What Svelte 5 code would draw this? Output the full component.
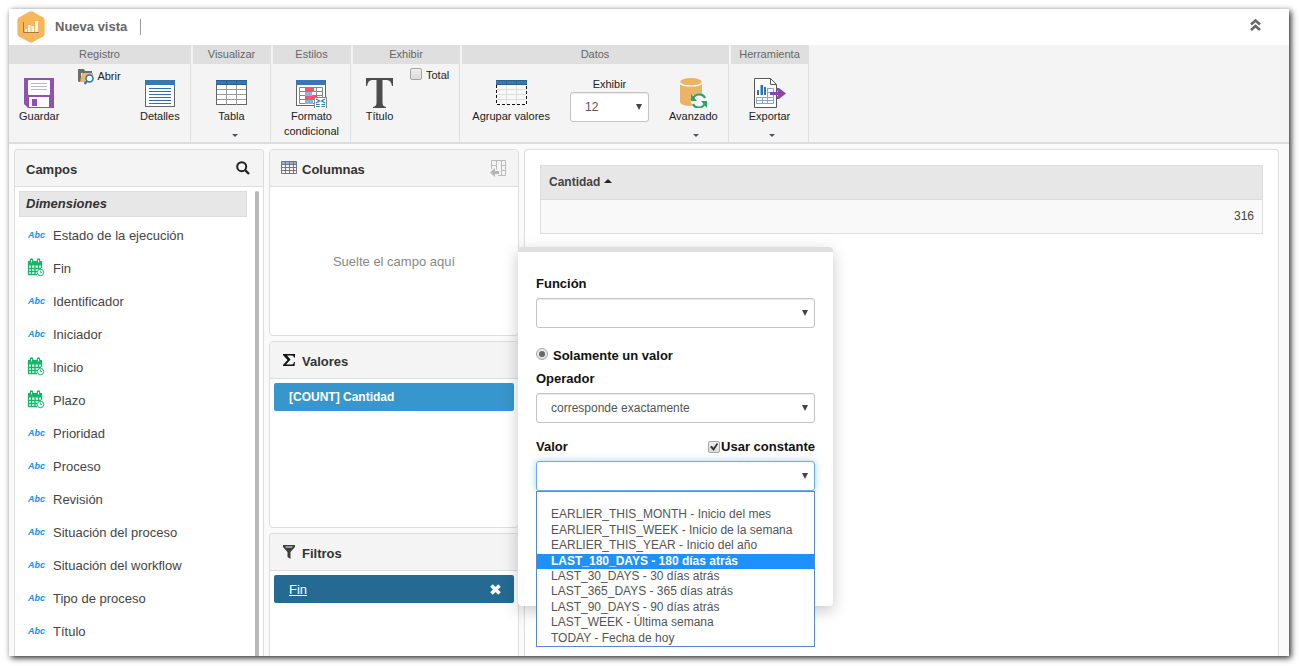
<script>
  const fields = [
    { name: 'Estado de la ejecución', type: 'text' },
    { name: 'Fin', type: 'date' },
    { name: 'Identificador', type: 'text' },
    { name: 'Iniciador', type: 'text' },
    { name: 'Inicio', type: 'date' },
    { name: 'Plazo', type: 'date' },
    { name: 'Prioridad', type: 'text' },
    { name: 'Proceso', type: 'text' },
    { name: 'Revisión', type: 'text' },
    { name: 'Situación del proceso', type: 'text' },
    { name: 'Situación del workflow', type: 'text' },
    { name: 'Tipo de proceso', type: 'text' },
    { name: 'Título', type: 'text' }
  ];

  const constants = [
    '',
    'EARLIER_THIS_MONTH - Inicio del mes',
    'EARLIER_THIS_WEEK - Inicio de la semana',
    'EARLIER_THIS_YEAR - Inicio del año',
    'LAST_180_DAYS - 180 días atrás',
    'LAST_30_DAYS - 30 días atrás',
    'LAST_365_DAYS - 365 días atrás',
    'LAST_90_DAYS - 90 días atrás',
    'LAST_WEEK - Última semana',
    'TODAY - Fecha de hoy'
  ];

  let highlighted = $state(4);
  let showTotal = $state(false);
  let useConstant = $state(true);
  let mode = $state('single');
</script>

{#snippet gridRows(color)}
  <path d="M1 9.5h29M1 14.5h29M1 19.5h29M10.5 4v21M20.5 4v21" stroke={color} fill="none" />
{/snippet}

<div class="page">
  <div class="window">
    <header class="titlebar">
      <svg class="logo" width="28" height="32" viewBox="0 0 28 32">
        <path d="M12 .8q2-1 4 0l10 5.6q1.6 1 1.6 3v13q0 2-1.6 3l-10 5.6q-2 1-4 0L2 25.400q-1.600-1-1.600-3v-13q0-2 1.600-3z" fill="#f6b65c" />
        <path d="M6.500 11v10.500H22" stroke="#a5794a" fill="none" />
        <path d="M8 18h2v3H8zM11 14h2.500v7H11zM14.500 15H17v6h-2.500zM18 10h3v11h-3z" fill="#fff6e8" />
      </svg>
      <h1>Nueva vista</h1>
      <span class="divider"></span>
      <button class="collapse" type="button" aria-label="Contraer">
        <svg width="11" height="14" viewBox="0 0 11 14">
          <path d="M1 6.500 5.500 2.500 10 6.500M1 12 5.500 8 10 12" stroke="#666" stroke-width="2.500" fill="none" />
        </svg>
      </button>
    </header>

    <nav class="ribbon">
      <section class="group registro">
        <h2>Registro</h2>
        <div class="tools thirds">
          <button class="tool" type="button">
            <svg width="32" height="30" viewBox="0 0 32 30">
              <path d="M1 0h30v30H5l-4-4z" fill="#8e52b1" />
              <rect x="5" y="2" width="22" height="15" rx="1" fill="#fff" />
              <path d="M8 5.500h16M8 8.500h16M8 11.500h16" stroke="#bbb" />
              <rect x="6" y="19" width="20" height="10" fill="#fff" />
              <rect x="9" y="21" width="5" height="7" fill="#8e52b1" />
            </svg>
            <span>Guardar</span>
          </button>
          <button class="tool small" type="button">
            <svg width="17" height="17" viewBox="0 0 17 17">
              <path d="M0 1h6l1 2h7v2H3v9H1L0 13z" fill="#6d6d6d" />
              <path d="M4 5h11v3H8l-1 6H2z" fill="#e9b567" />
              <circle cx="11.500" cy="10.500" r="3.500" fill="#fff" stroke="#2f71b1" stroke-width="1.600" />
              <path d="m9 13-2.500 3" stroke="#2f71b1" stroke-width="2" />
            </svg>
            <span>Abrir</span>
          </button>
          <button class="tool" type="button">
            <svg width="32" height="30" viewBox="0 0 32 30">
              <rect x="1.500" y="2.500" width="29" height="26" fill="#fff" stroke="#666" />
              <rect x="1" y="2" width="30" height="5" fill="#3a76b5" />
              <path d="M5 10.500h22M5 13.500h22M5 16.500h22M5 19.500h22M5 22.500h22M5 25.500h22" stroke="#2f71b1" />
            </svg>
            <span>Detalles</span>
          </button>
        </div>
      </section>

      <section class="group">
        <h2>Visualizar</h2>
        <div class="tools">
          <button class="tool" type="button">
            <svg width="31" height="30" viewBox="0 -2 31 30">
              <rect x=".5" y=".5" width="30" height="24" fill="#fff" stroke="#666" />
              {@render gridRows('#999')}
              <rect width="31" height="5" fill="#3a76b5" />
              <path d="M10.500 1v3M20.500 1v3M0 .5h31M0 4.500h31" stroke="#2c5f94" />
            </svg>
            <span>Tabla</span>
            <i class="caret"></i>
          </button>
        </div>
      </section>

      <section class="group">
        <h2>Estilos</h2>
        <div class="tools">
          <button class="tool" type="button">
            <svg width="31" height="30" viewBox="0 0 31 30">
              <rect x=".5" y="2.500" width="29" height="25" fill="#fff" stroke="#666" />
              <rect width="30" height="5" y="2" fill="#3a76b5" />
              <path d="M3.500 9.500h23v16h-23zM3 13.500h24M3 17.500h24M3 21.500h24M20.500 9v12" stroke="#888" fill="none" />
              <rect x="9" y="10" width="9" height="4" fill="#f4556a" />
              <rect x="9" y="14" width="7" height="4" fill="#8fb0e4" />
              <rect x="9" y="18" width="12" height="4" fill="#f4556a" />
              <rect x="9" y="22" width="8" height="4" fill="#8fb0e4" />
              <rect x="18.500" y="19.500" width="12" height="11" fill="#fff" stroke="#888" />
              <path d="m20 21 3.500 2L20 25M29 21l-3.500 2 3.500 2M20 26.500h3.500M20 28.500h3.500M25.500 26.500H29M25.500 28.500H29" stroke="#1f7fb5" stroke-width="1.200" fill="none" />
            </svg>
            <span>Formato<br />condicional</span>
          </button>
        </div>
      </section>

      <section class="group exhibir">
        <h2>Exhibir</h2>
        <div class="tools halves">
          <button class="tool" type="button">
            <svg width="28" height="30" viewBox="0 0 28 30">
              <path d="M0 0h27v8h-1q-1-6-5-6h-4.500v23q0 3.500 3.500 4v1H7v-1q3.500-.5 3.500-4V2H6Q2 2 1 8H0z" fill="#4c4c4c" />
            </svg>
            <span>Título</span>
          </button>
          <label class="total">
            <input type="checkbox" bind:checked={showTotal} />
            Total
          </label>
        </div>
      </section>

      <section class="group datos">
        <h2>Datos</h2>
        <div class="tools">
          <button class="tool" type="button">
            <svg width="31" height="30" viewBox="0 -2 31 30">
              <path d="M0 0h31v25H0z" fill="#f8f8f8" />
              {@render gridRows('#ddd')}
              <path d="M.5 5v19.500h30V5" stroke="#111" stroke-dasharray="3 2" fill="none" />
              <rect width="31" height="5" fill="#3a76b5" />
              <path d="M10.500 1v3M20.500 1v3M0 .5h31M0 4.500h31" stroke="#2c5f94" />
            </svg>
            <span>Agrupar valores</span>
          </button>
          <div class="amount">
            <label for="amount">Exhibir</label>
            <div class="select">
              <select id="amount">
                <option>12</option>
                <option>24</option>
              </select>
            </div>
          </div>
          <button class="tool" type="button">
            <svg width="28" height="30" viewBox="0 0 28 30">
              <path d="M1 4v20q1 4 11 4t11-4V4z" fill="#e9b565" />
              <ellipse cx="12" cy="4" rx="11" ry="4" fill="#e9b565" />
              <path d="M1 4.500q1 3.500 11 3.500t11-3.500" stroke="#fff" stroke-width="1.200" fill="none" />
              <circle cx="20" cy="23" r="8" fill="#f4f4f4" />
              <path d="M14 21a6.500 6.500 0 0 1 12-1M26 25a6.500 6.500 0 0 1-12 1" stroke="#2fa36b" stroke-width="2.200" fill="none" />
              <path d="M12 16v7h6zM28 30v-7h-6z" fill="#2fa36b" />
            </svg>
            <span>Avanzado</span>
            <i class="caret"></i>
          </button>
        </div>
      </section>

      <section class="group">
        <h2>Herramienta</h2>
        <div class="tools">
          <button class="tool" type="button">
            <svg width="33" height="30" viewBox="0 0 33 30">
              <path d="M1.500.5h16l6 6v23h-22z" fill="#fff" stroke="#555" />
              <path d="M17.500.5v6h6" fill="none" stroke="#555" />
              <path d="M4 12h2v5H4zM7.500 7h2.500v10H7.500zM11 9h2v8h-2z" fill="#2f71b1" />
              <path d="M14.500 10.500h6v15h-17v-6h17M3.500 22.500h17M9.500 19.500v6M14.500 10v16M14 14.500h6" stroke="#86a5d3" fill="none" />
              <path d="M17 14h8l-2-4h3l7 5.500-7 5.500h-3l2-4h-8z" fill="#8e44ad" />
            </svg>
            <span>Exportar</span>
            <i class="caret"></i>
          </button>
        </div>
      </section>
    </nav>

    <main class="workspace">
      <aside class="panel fields">
        <div class="panel-header">
          <h3>Campos</h3>
          <button class="icon-button" type="button" aria-label="Buscar">
            <svg width="14" height="14" viewBox="0 0 14 14">
              <circle cx="5.700" cy="5.700" r="4.500" stroke="#222" stroke-width="2" fill="none" />
              <path d="m9 9 4 4" stroke="#222" stroke-width="2.400" />
            </svg>
          </button>
        </div>
        <div class="field-scroll">
          <div class="field-body">
            <h4>Dimensiones</h4>
            <ul class="field-list">
              {#each fields as field}
                <li>
                  {#if field.type === 'date'}
                    <svg width="18" height="19" viewBox="0 0 18 19">
                      <path d="M1 3h14v4.500H1z" fill="#12b866" />
                      <path d="M1.500 4v12.500H10M14.500 4v6M1 10.500h13M1 13.500h9M4.500 7v10M8 7v10M11.500 7v4" stroke="#12b866" stroke-width="1.300" fill="none" />
                      <path d="M4.500 4.500V2M11.500 4.500V2" stroke="#12b866" stroke-width="3.500" stroke-linecap="round" />
                      <path d="M4.500 4.500V2M11.500 4.500V2" stroke="#fff" />
                      <circle cx="13.500" cy="14.500" r="3.200" fill="#fff" stroke="#12b866" />
                      <path d="M13.500 12.500v2h1.500" stroke="#12b866" stroke-width=".8" fill="none" />
                    </svg>
                  {:else}
                    <span class="abc">Abc</span>
                  {/if}
                  {field.name}
                </li>
              {/each}
            </ul>
          </div>
          <div class="scroll-thumb"></div>
        </div>
      </aside>

      <div class="zones">
        <section class="panel zone">
          <div class="panel-header">
            <svg width="17" height="14" viewBox="0 0 17 14">
              <path d="M1 1h15v3H1z" fill="#8fb0e4" />
              <path d="M.5.500h15v12H.5zM0 3.500h16M0 6.500h16M0 9.500h16M4.500 0v13M8.500 0v13M12.500 0v13" stroke="#777" fill="none" />
            </svg>
            <h3>Columnas</h3>
            <button class="icon-button" type="button" aria-label="Mover columnas">
              <svg width="17" height="17" viewBox="0 0 17 17">
                <path d="M1.500 9V.5h14v15H8M6.500.500v9M11.500.500v15M1.500 5.500h5M11.500 5.500h4M11.500 10.500h4" stroke="#bbb" fill="none" />
                <path d="M0 12.500 5 8v3h4v3H5v3z" fill="#b5b5b5" />
              </svg>
            </button>
          </div>
          <div class="drop">Suelte el campo aquí</div>
        </section>

        <section class="panel zone">
          <div class="panel-header">
            <svg width="17" height="14" viewBox="0 0 17 14">
              <path d="M2 1h12v3.500h-1Q12.500 2.500 11 2.500H6L9.500 6.500 5 11.500h6q1.500 0 2-2.500h1l-.5 4H2v-1L6.500 7 2 2z" fill="#111" />
            </svg>
            <h3>Valores</h3>
          </div>
          <div class="chips">
            <div class="chip value">[COUNT] Cantidad</div>
          </div>
        </section>

        <section class="panel zone open">
          <div class="panel-header">
            <svg width="17" height="16" viewBox="0 0 17 16">
              <path d="M2 1h12v2L9.500 8v7L6.500 13V8L2 3z" fill="#3d3d3d" />
              <path d="M4.500 3h7" stroke="#f4f4f4" />
            </svg>
            <h3>Filtros</h3>
          </div>
          <div class="chips">
            <div class="chip filter">
              <a href="#fin">Fin</a>
              <button type="button" aria-label="Quitar filtro">
                <svg width="11" height="11" viewBox="0 0 11 11">
                  <path d="m1.500 1.500 8 8M9.500 1.500l-8 8" stroke="#fff" stroke-width="3.600" />
                </svg>
              </button>
            </div>
          </div>
        </section>

        <form class="popover">
          <label class="caption" for="func">Función</label>
          <div class="select">
            <select id="func"><option></option></select>
          </div>
          <label class="choice">
            <input type="radio" name="mode" value="single" bind:group={mode} />
            Solamente un valor
          </label>
          <label class="caption" for="operator">Operador</label>
          <div class="select">
            <select id="operator"><option>corresponde exactamente</option></select>
          </div>
          <div class="caption-row">
            <label for="constant">Valor</label>
            <label class="constant">
              <input type="checkbox" bind:checked={useConstant} />Usar constante
            </label>
          </div>
          <div class="select active">
            <select id="constant"><option></option></select>
            <ul class="menu" role="listbox" aria-label="Valor">
              {#each constants as constant, i}
                <li
                  role="option"
                  aria-selected={i === highlighted}
                  class:highlighted={i === highlighted}
                  onmouseenter={() => (highlighted = i)}
                >{constant}</li>
              {/each}
            </ul>
          </div>
        </form>
      </div>

      <section class="panel result">
        <table>
          <thead>
            <tr><th>Cantidad <i class="sort"></i></th></tr>
          </thead>
          <tbody>
            <tr><td>316</td></tr>
          </tbody>
        </table>
      </section>
    </main>
  </div>
</div>

<style>
  :global(body) {
    background: #fff;
    font-family: "Liberation Sans", Arial, sans-serif;
  }

  .page, .page * {
    box-sizing: border-box;
  }

  h1, h2, h3, h4, ul {
    margin: 0;
    padding: 0;
  }

  button, select {
    font: inherit;
    color: inherit;
  }

  button {
    padding: 0;
    border: 0;
    background: none;
    cursor: pointer;
  }

  svg {
    display: block;
    flex: none;
  }

  .page {
    display: flex;
    height: 100vh;
    padding: 9px 10px 10px 9px;
  }

  .window {
    flex: 1;
    display: flex;
    flex-direction: column;
    min-width: 0;
    background: #fafafa;
    box-shadow: 2px 2px 6px rgba(0, 0, 0, 0.85);
  }

  .titlebar {
    display: flex;
    align-items: center;
    height: 36px;
    padding: 0 28px 0 8px;
    background: #fff;
  }

  h1 {
    margin: 0 13px 2px 10px;
    font-size: 13px;
    color: #666;
  }

  .divider {
    width: 1px;
    height: 16px;
    background: #999;
  }

  .collapse {
    margin-left: auto;
    padding-bottom: 4px;
  }

  /* ribbon */
  .ribbon {
    display: flex;
    gap: 2px;
    height: 99px;
    background: #f4f4f4;
    border-bottom: 2px solid #ddd;
    font-size: 11px;
    line-height: 15px;
    color: #222;
  }

  .group {
    min-width: 78px;
    border-right: 1px solid #e0e0e0;
  }

  .registro {
    min-width: 182px;
  }

  .exhibir {
    min-width: 107px;
  }

  .datos {
    min-width: 267px;
  }

  h2 {
    height: 19px;
    background: #dfdfdf;
    font-size: 11px;
    font-weight: normal;
    line-height: 19px;
    text-align: center;
    color: #666;
  }

  .tools {
    display: flex;
    justify-content: center;
    align-items: flex-start;
  }

  .thirds {
    display: grid;
    grid-template-columns: repeat(3, 1fr);
  }

  .halves {
    display: grid;
    grid-template-columns: 1fr 1fr;
  }

  .tool {
    display: flex;
    flex-direction: column;
    align-items: center;
    gap: 1px;
    padding-top: 14px;
    line-height: 15px;
  }

  .datos .tool {
    padding-left: 9px;
    padding-right: 9px;
  }

  .tool.small {
    flex-direction: row;
    justify-content: center;
    gap: 2px;
    padding-top: 4px;
  }

  .caret {
    margin: 9px 0 0 6px;
    border: 3px solid transparent;
    border-top-color: #3f5673;
    border-bottom: 0;
  }

  .total {
    display: flex;
    gap: 4px;
    padding: 4px 0 0 4px;
  }

  .amount {
    padding: 12px 11px 0;
    text-align: center;
  }

  .amount label {
    display: block;
    line-height: 16px;
  }

  .amount .select {
    width: 79px;
  }

  input {
    position: relative;
    flex: none;
    width: 12px;
    height: 12px;
    margin: 0;
    appearance: none;
    border: 1px solid #a5a5a5;
    border-radius: 2px;
    background: linear-gradient(#f0f0f0, #dcdcdc);
  }

  input[type="radio"] {
    border-radius: 50%;
  }

  input[type="radio"]:checked::before {
    content: "";
    position: absolute;
    inset: 2px;
    border-radius: 50%;
    background: #666;
  }

  input[type="checkbox"]:checked::before {
    content: "";
    position: absolute;
    inset: 1px;
    background: #333;
    clip-path: polygon(0 50%, 20% 35%, 42% 60%, 85% 0, 100% 12%, 45% 100%);
  }

  .select {
    position: relative;
  }

  .select::after {
    content: "";
    position: absolute;
    top: 12px;
    right: 7px;
    border: 3px solid transparent;
    border-top: 6px solid #444;
    border-bottom: 0;
    pointer-events: none;
  }

  select {
    display: block;
    width: 100%;
    height: 30px;
    padding: 0 14px;
    appearance: none;
    border: 1px solid #c4c4c4;
    border-radius: 3px;
    background: #fff;
    box-shadow: inset 0 1px 1px rgba(0, 0, 0, 0.08);
    font-size: 12px;
    font-weight: normal;
    color: #555;
    outline: none;
  }

  .active select {
    border-color: #66afe9;
    box-shadow: 0 0 7px rgba(102, 175, 233, 0.6);
  }

  /* workspace */
  .workspace {
    flex: 1;
    display: flex;
    gap: 5px;
    min-height: 0;
    padding: 5px 10px 0 5px;
    font-size: 13px;
    color: #444;
  }

  .panel {
    background: #fff;
    border: 1px solid #ddd;
    border-radius: 4px;
  }

  .panel-header {
    display: flex;
    align-items: center;
    gap: 4px;
    height: 37px;
    padding: 0 11px;
    background: #f4f4f4;
    border-bottom: 1px solid #ddd;
    border-radius: 4px 4px 0 0;
  }

  h3 {
    padding-top: 2px;
    font-size: 13px;
    color: #333;
  }

  .icon-button {
    margin-left: auto;
  }

  .fields {
    display: flex;
    flex-direction: column;
    flex: 0 0 250px;
    border-bottom: 0;
    border-radius: 4px 4px 0 0;
  }

  .fields .panel-header {
    padding-right: 13px;
  }

  .field-scroll {
    flex: 1;
    display: flex;
    gap: 8px;
    min-height: 0;
    padding: 4px 4px 0;
  }

  .field-body {
    flex: 1;
  }

  .scroll-thumb {
    width: 4px;
    border-radius: 2px 2px 0 0;
    background: #b8b8b8;
  }

  h4 {
    height: 26px;
    padding-left: 6px;
    border: 1px solid #ddd;
    background: #e7e7e7;
    font-size: 13px;
    font-style: italic;
    line-height: 24px;
    color: #333;
  }

  .field-list {
    padding: 2px 0 0 8px;
    list-style: none;
  }

  .field-list li {
    display: flex;
    align-items: center;
    gap: 8px;
    height: 33px;
  }

  .field-list svg {
    margin-bottom: 2px;
  }

  .abc {
    width: 18px;
    margin-bottom: 2px;
    padding-left: 1px;
    font: italic bold 9px/16px "Liberation Sans Narrow", "Liberation Sans", sans-serif;
    color: #0f93f0;
  }

  .zones {
    position: relative;
    display: flex;
    flex-direction: column;
    flex: 0 0 250px;
    gap: 5px;
  }

  .zone {
    display: flex;
    flex-direction: column;
    flex: 0 0 187px;
  }

  .zone.open {
    flex: 1;
    border-bottom: 0;
    border-radius: 4px 4px 0 0;
  }

  .drop {
    flex: 1;
    display: grid;
    place-items: center;
    color: #888;
  }

  .chips {
    padding: 4px;
  }

  .chip {
    display: flex;
    align-items: center;
    justify-content: space-between;
    height: 28px;
    padding: 0 13px 0 15px;
    border-radius: 2px;
    color: #fff;
  }

  .chip.value {
    background: #3896ce;
    font-size: 12px;
    font-weight: bold;
  }

  .chip.filter {
    background: #256a93;
  }

  .chip a {
    color: inherit;
  }

  .result {
    flex: 1;
    padding: 15px;
    border-bottom: 0;
    border-radius: 4px 4px 0 0;
  }

  table {
    width: 100%;
    border-collapse: collapse;
    font-size: 12px;
  }

  th, td {
    height: 34px;
    padding: 0 8px 2px;
    border: 1px solid #ddd;
  }

  th {
    background: #e7e7e7;
    text-align: left;
    color: #444;
  }

  td {
    background: #f9f9f9;
    text-align: right;
  }

  .sort {
    display: inline-block;
    border: 4px solid transparent;
    border-top: 0;
    border-bottom-color: #222;
    vertical-align: 3px;
  }

  /* filter editor */
  .popover {
    position: absolute;
    z-index: 2;
    top: 98px;
    left: calc(100% - 1px);
    width: 315px;
    height: 359px;
    padding: 24px 18px 0;
    border-top: 5px solid #dfdfdf;
    border-radius: 4px;
    background: #fff;
    box-shadow: 0 5px 16px rgba(0, 0, 0, 0.22);
    font-weight: bold;
    line-height: 16px;
    color: #111;
  }

  .caption {
    display: block;
    margin-bottom: 6px;
  }

  .choice {
    display: flex;
    gap: 5px;
    margin: 20px 0 7px;
  }

  .caption-row {
    display: flex;
    justify-content: space-between;
    margin: 16px 0 6px;
  }

  .constant {
    display: flex;
    gap: 1px;
    align-items: center;
  }

  .menu {
    position: absolute;
    top: 100%;
    left: 0;
    right: 0;
    display: grid;
    grid-auto-rows: 1fr;
    height: 156px;
    border: 1px solid #5b87cc;
    background: #fff;
    font-size: 12px;
    font-weight: normal;
    line-height: 15px;
    list-style: none;
    color: #555;
  }

  .menu li {
    padding-left: 14px;
    white-space: nowrap;
  }

  .menu .highlighted {
    background: #1e90ff;
    color: #fff;
    font-weight: bold;
  }
</style>
